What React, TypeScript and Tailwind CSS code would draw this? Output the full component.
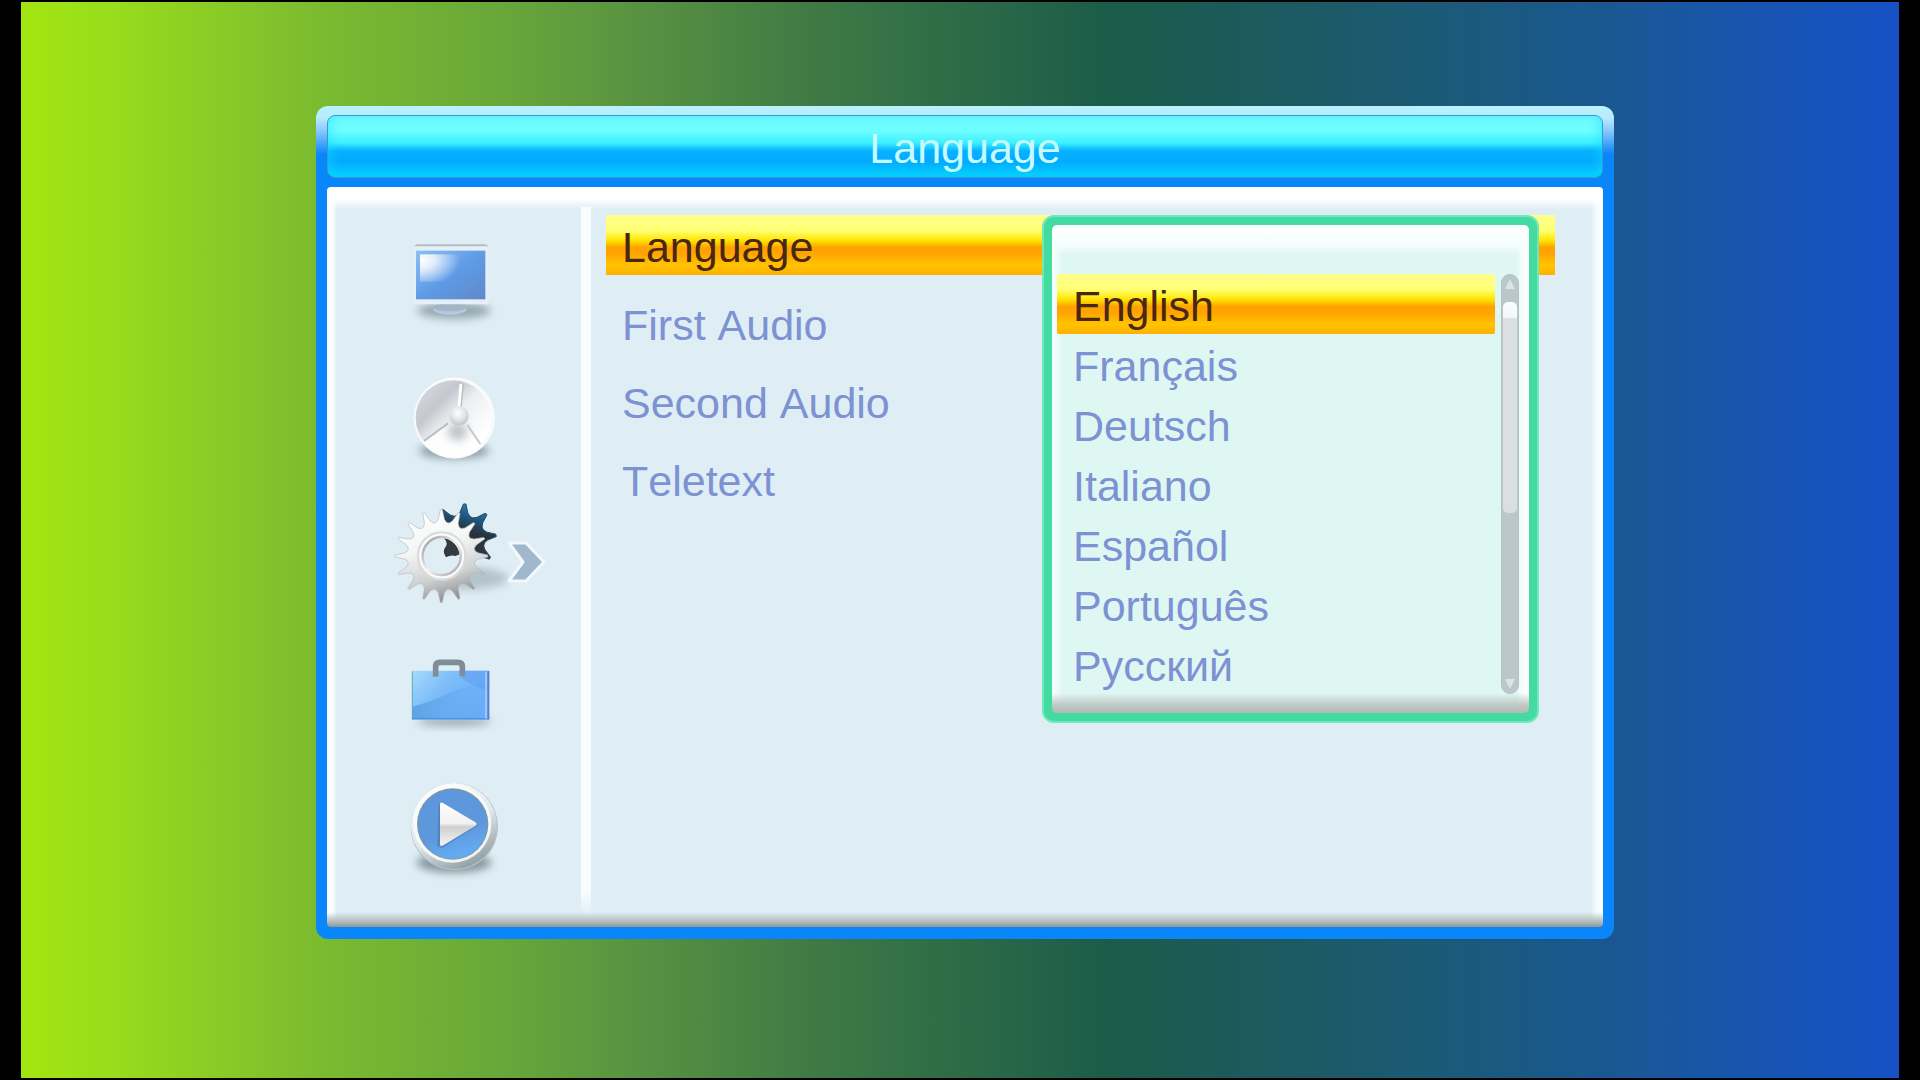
import { useState } from "react";
import type { ReactNode } from "react";
import clsx from "clsx";

const SECTIONS = ["Picture", "Channel Search", "System", "Tools", "Media"] as const;
type Section = (typeof SECTIONS)[number];

const MENU = ["Language", "First Audio", "Second Audio", "Teletext"];
const LANGUAGES = ["English", "Français", "Deutsch", "Italiano", "Español", "Português", "Русский"];

const HIGHLIGHT =
  "bg-[linear-gradient(to_bottom,#ffff8c_0%,#ffff74_26%,#ffe600_42%,#ffa200_54%,#ffa400_64%,#ffc400_84%,#ffb000_100%)] text-[#4a2614]";

// Spiky gear outline: one narrow tip per tooth, straight valleys between them.
function gearPoints(cx: number, cy: number, teeth: number, tip: number, root: number, start: number) {
  const step = 360 / teeth;
  const points: string[] = [];
  const at = (angle: number, r: number) => {
    const rad = (angle * Math.PI) / 180;
    points.push(`${(cx + r * Math.cos(rad)).toFixed(1)},${(cy + r * Math.sin(rad)).toFixed(1)}`);
  };
  for (let i = 0; i < teeth; i++) {
    const a = start + i * step;
    at(a - step * 0.4, root);
    at(a - step * 0.22, root + 8);
    at(a - step * 0.05, tip - 1);
    at(a + step * 0.05, tip);
    at(a + step * 0.22, root + 8);
    at(a + step * 0.4, root);
  }
  return points.join(" ");
}

function IconFrame({ top, children }: { top: number; children: ReactNode }) {
  return (
    <svg viewBox={`0 ${-top} 540 411`} className="h-[137px] w-[180px]" aria-hidden>
      {children}
    </svg>
  );
}

function MonitorIcon() {
  return (
    <IconFrame top={21}>
      <defs>
        <linearGradient id="screen" x1="0" y1="0" x2="1" y2="1">
          <stop offset="0" stopColor="#8cc0f4" />
          <stop offset="0.5" stopColor="#5f9be6" />
          <stop offset="1" stopColor="#6089c8" />
        </linearGradient>
        <radialGradient id="glare" cx="0" cy="0.2" r="1">
          <stop offset="0" stopColor="#fff" />
          <stop offset="0.35" stopColor="#fff" stopOpacity="0.8" />
          <stop offset="1" stopColor="#fff" stopOpacity="0" />
        </radialGradient>
        <filter id="soft" x="-30%" y="-60%" width="160%" height="220%">
          <feGaussianBlur stdDeviation="13" />
        </filter>
      </defs>
      <ellipse cx="222" cy="272" rx="110" ry="24" fill="#75868f" opacity="0.7" filter="url(#soft)" />
      <ellipse cx="210" cy="268" rx="50" ry="16" fill="#b4cbe2" />
      <ellipse cx="210" cy="262" rx="50" ry="12" fill="#a3b6c8" />
      <path d="M102 82 q2 -9 12 -9 h200 q9 0 11 9 z" fill="#b3bfc4" />
      <rect x="100" y="79" width="226" height="174" rx="5" fill="#e6eff8" />
      <rect x="108" y="92" width="208" height="146" fill="url(#screen)" />
      <rect x="120" y="103" width="120" height="82" fill="url(#glare)" />
    </IconFrame>
  );
}

function DishIcon() {
  return (
    <IconFrame top={30}>
      <defs>
        <linearGradient id="dish" x1="0.1" y1="0.1" x2="0.8" y2="0.8">
          <stop offset="0" stopColor="#d5d9de" />
          <stop offset="0.3" stopColor="#c4c8cf" />
          <stop offset="0.55" stopColor="#eceef1" />
          <stop offset="1" stopColor="#fff" />
        </linearGradient>
        <radialGradient id="knob" cx="0.45" cy="0.35" r="0.6">
          <stop offset="0" stopColor="#fff" />
          <stop offset="0.6" stopColor="#e3e4e7" />
          <stop offset="1" stopColor="#c6c8cc" />
        </radialGradient>
      </defs>
      <ellipse cx="222" cy="272" rx="105" ry="24" fill="#7a8b94" opacity="0.85" filter="url(#soft)" />
      <circle cx="223" cy="174" r="122" fill="#f8fafb" />
      <circle cx="220" cy="174" r="113" fill="url(#dish)" />
      <path d="M205 190 L128 245 Q168 290 225 292 Q275 290 303 252 L262 195 Z" fill="#fff" opacity="0.8" />
      <ellipse cx="233" cy="214" rx="30" ry="28" fill="#a9adb2" opacity="0.7" filter="url(#soft)" />
      <path d="M243 72 L237 145" stroke="#fff" strokeWidth="9" />
      <path d="M250 72 L243 142" stroke="#b9bdc2" strokeWidth="4" />
      <path d="M204 190 L132 243" stroke="#b9bdc2" strokeWidth="6" />
      <path d="M262 195 L301 252" stroke="#c4c7cb" strokeWidth="6" />
      <circle cx="237" cy="168" r="29" fill="url(#knob)" />
    </IconFrame>
  );
}

function GearIcon() {
  return (
    <IconFrame top={9}>
      <defs>
        <linearGradient id="steel" x1="0.3" y1="0" x2="0.6" y2="1">
          <stop offset="0" stopColor="#fff" />
          <stop offset="0.4" stopColor="#f4f5f5" />
          <stop offset="0.72" stopColor="#cfd0d1" />
          <stop offset="1" stopColor="#85888a" />
        </linearGradient>
        <linearGradient id="ring" x1="0" y1="0" x2="1" y2="1">
          <stop offset="0" stopColor="#8f9294" />
          <stop offset="0.5" stopColor="#f2f2f2" />
          <stop offset="1" stopColor="#9da0a2" />
        </linearGradient>
        <linearGradient id="dark" x1="0.7" y1="0" x2="0.4" y2="1">
          <stop offset="0" stopColor="#2c7fbd" />
          <stop offset="0.22" stopColor="#1d5680" />
          <stop offset="0.4" stopColor="#27323a" />
          <stop offset="1" stopColor="#3c4145" />
        </linearGradient>
        <clipPath id="hole">
          <circle cx="185" cy="198" r="54" />
        </clipPath>
      </defs>
      <ellipse cx="255" cy="265" rx="130" ry="34" fill="#8a99a1" opacity="0.5" filter="url(#soft)" />
      <polygon
        points={gearPoints(245, 145, 9, 104, 70, -85)}
        fill="url(#dark)"
        stroke="#2a4a60"
        strokeWidth="3"
        strokeLinejoin="round"
      />
      <polygon
        points={gearPoints(184, 198, 16, 140, 102, -90)}
        fill="url(#steel)"
        stroke="#b3b8bb"
        strokeWidth="2"
        strokeLinejoin="round"
      />
      <circle cx="185" cy="198" r="54" fill="#dfeef5" />
      <g clipPath="url(#hole)">
        <path d="M186 138 Q208 158 196 172 Q186 184 198 202 Q212 194 226 198 L246 190 V138 Z" fill="#363a3f" />
      </g>
      <circle cx="185" cy="198" r="71" fill="none" stroke="#d9dbdc" strokeWidth="7" />
      <circle cx="185" cy="198" r="64" fill="none" stroke="#fafafa" strokeWidth="7" />
      <circle cx="185" cy="198" r="57" fill="none" stroke="url(#ring)" strokeWidth="7" />
    </IconFrame>
  );
}

function BriefcaseIcon() {
  return (
    <IconFrame top={48}>
      <defs>
        <linearGradient id="case" x1="0" y1="0" x2="1" y2="0.6">
          <stop offset="0" stopColor="#a6dcfb" />
          <stop offset="0.45" stopColor="#7cbcf8" />
          <stop offset="1" stopColor="#6badf8" />
        </linearGradient>
        <linearGradient id="wave" x1="0" y1="0" x2="1" y2="0">
          <stop offset="0" stopColor="#4f98dc" stopOpacity="0.7" />
          <stop offset="1" stopColor="#66adf8" stopOpacity="0.2" />
        </linearGradient>
      </defs>
      <ellipse cx="222" cy="244" rx="112" ry="14" fill="#7c8f99" opacity="0.7" filter="url(#soft)" />
      <rect x="96" y="92" width="232" height="147" rx="3" fill="url(#case)" />
      <path d="M97 200 Q160 184 205 160 T328 128 V236 H97 Z" fill="url(#wave)" />
      <path d="M240 92 H328 V150 Q290 146 240 112 Z" fill="#5b9cf2" opacity="0.5" />
      <path d="M97 94 V238" stroke="#5aa9c4" strokeWidth="3" />
      <path d="M96 236 H328" stroke="#4a94dc" strokeWidth="4" />
      <path d="M318 95 V236" stroke="#b9d3fb" strokeWidth="4" />
      <path d="M325 93 V238" stroke="#5a7fd0" strokeWidth="5" />
      <path d="M167 110 V80 Q167 67 180 67 H234 Q247 67 247 80 V108" fill="none" stroke="#808d98" strokeWidth="17" />
    </IconFrame>
  );
}

function PlayIcon() {
  return (
    <IconFrame top={27}>
      <defs>
        <linearGradient id="rim" x1="0.2" y1="0" x2="0.7" y2="1">
          <stop offset="0" stopColor="#fff" />
          <stop offset="0.55" stopColor="#dfe8ea" />
          <stop offset="1" stopColor="#8c9a9f" />
        </linearGradient>
        <linearGradient id="disc" x1="0" y1="0" x2="0.3" y2="1">
          <stop offset="0" stopColor="#5c97dc" />
          <stop offset="0.7" stopColor="#5e98dc" />
          <stop offset="1" stopColor="#63aaf0" />
        </linearGradient>
        <linearGradient id="arrow" x1="0" y1="0" x2="0" y2="1">
          <stop offset="0" stopColor="#fff" />
          <stop offset="0.48" stopColor="#f1f1f1" />
          <stop offset="0.56" stopColor="#cfcfd0" />
          <stop offset="1" stopColor="#f6f6f6" />
        </linearGradient>
      </defs>
      <ellipse cx="222" cy="278" rx="112" ry="30" fill="#6c7e86" opacity="0.8" filter="url(#soft)" />
      <circle cx="223" cy="170" r="131" fill="#b3bfc3" />
      <circle cx="222" cy="168" r="129" fill="url(#rim)" />
      <circle cx="217" cy="161" r="117" fill="#f8fbfc" opacity="0.9" />
      <circle cx="218" cy="162" r="107" fill="#80949f" />
      <circle cx="218" cy="163" r="104" fill="url(#disc)" />
      <path d="M176 102 L172 228 L186 234 L294 166 Z" fill="#3f6ca8" opacity="0.5" />
      <path d="M180 104 Q180 94 190 100 L286 157 Q294 163 286 168 L190 226 Q180 232 180 222 Z" fill="url(#arrow)" />
    </IconFrame>
  );
}

const ICONS: Record<Section, () => ReactNode> = {
  Picture: MonitorIcon,
  "Channel Search": DishIcon,
  System: GearIcon,
  Tools: BriefcaseIcon,
  Media: PlayIcon,
};

function Sidebar({ active, onSelect }: { active: Section; onSelect: (section: Section) => void }) {
  return (
    <nav className="w-[254px] shrink-0 pt-[26px] pb-[29px]" aria-label="Sections">
      {SECTIONS.map((section) => {
        const Icon = ICONS[section];
        return (
          <button
            key={section}
            type="button"
            aria-label={section}
            aria-current={section === active}
            className="relative block h-[137px] w-full pl-[53px]"
            onClick={() => onSelect(section)}
          >
            <Icon />
            {section === active && (
              <svg viewBox="0 0 40 48" className="absolute top-[51px] right-[35px] h-12 w-10" aria-hidden>
                <path
                  d="M3 5 H20 L38 24 L20 43 H3 L17 24 Z"
                  fill="#9fb8cb"
                  stroke="#f2f8fb"
                  strokeWidth="3"
                  strokeLinejoin="round"
                />
              </svg>
            )}
          </button>
        );
      })}
    </nav>
  );
}

function LanguagePopup({ value, onChange }: { value: string; onChange: (language: string) => void }) {
  return (
    <div className="absolute top-0 right-4 z-10 w-[497px] rounded-[12px] border-2 border-[#6fe8bb] bg-[#43dba2] p-2">
      <div className="flex rounded-[5px] bg-[linear-gradient(to_top,#b2b9b6_0,#bfc9c5_8px,transparent_20px),linear-gradient(to_bottom,#ffffff_0,#f4fefd_20px,transparent_30px),linear-gradient(to_left,#ffffff_0,#f4fdfb_8px,transparent_12px),linear-gradient(to_right,#f8fefd_0,#e8faf6_8px,transparent_10px)] bg-[#dff7f3] pt-[49px] pr-[10px] pb-[19px] pl-[5px]">
        <div role="listbox" aria-label="Language" className="min-w-0 flex-1">
          {LANGUAGES.map((language) => (
            <button
              key={language}
              type="button"
              role="option"
              aria-selected={language === value}
              className={clsx(
                "block h-[60px] w-full rounded-[2px] px-4 pt-1 text-left",
                language === value && HIGHLIGHT,
              )}
              onClick={() => onChange(language)}
            >
              {language}
            </button>
          ))}
        </div>
        <div className="ml-[6px] flex w-[18px] flex-col items-center rounded-full border border-[#b4c2c4] bg-[#bac8ca] pb-1">
          <svg viewBox="0 0 10 10" className="mt-1 h-[10px] w-[10px]" aria-hidden>
            <path d="M5 0 L10 10 H0 Z" fill="#dde3e4" />
          </svg>
          <div className="mt-[13px] h-[211px] w-[14px] rounded-[5px] bg-[linear-gradient(to_bottom,#fbfdfe_0,#f4f8fa_15px,#dcdfe0_17px)]" />
          <svg viewBox="0 0 10 10" className="mt-auto h-[10px] w-[10px]" aria-hidden>
            <path d="M0 0 H10 L5 10 Z" fill="#dde3e4" />
          </svg>
        </div>
      </div>
    </div>
  );
}

export default function App() {
  const [section, setSection] = useState<Section>("System");
  const [item, setItem] = useState("Language");
  const [language, setLanguage] = useState("English");

  return (
    <main className="min-h-screen border-x-[21px] border-y-2 border-black bg-[linear-gradient(to_right,#a2e610_0%,#98dc1c_5%,#7dbd2e_15%,#68a63a_26%,#558f42_34%,#3d7845_43%,#1b5c49_58%,#1c5a5e_66%,#1b5a78_76%,#1a5793_85%,#1855b0_92%,#1652c6_100%)] pt-[104px] pr-[285px] pb-[139px] pl-[295px] font-['Liberation_Sans',Arial,sans-serif] text-[43px] leading-[56px] text-[#7d92d2] [font-kerning:none]">
      <section className="rounded-[12px] bg-[linear-gradient(to_bottom,#b8f2ff_0,#b9eafc_12px,#86c4fb_26px,#0a86fb_48px)] px-[11px] pt-[9px] pb-3">
        <h1 className="h-[63px] rounded-[8px] border border-[#2f9fd0] bg-[linear-gradient(to_bottom,#84ffff_0%,#6cfeff_25%,#3cf0ff_44%,#07b2ff_57%,#04aaff_74%,#00c6ff_94%)] pt-1 text-center text-[#c4fbff] shadow-[inset_0_0_14px_#14dcffaa]">
          Language
        </h1>

        <div className="mt-[9px] flex rounded-[4px] bg-[linear-gradient(to_top,#8f9796_0,#b6bfbf_6px,transparent_15px),linear-gradient(to_bottom,#ffffff_0,#ffffff_12px,transparent_22px),linear-gradient(to_right,#ffffff_0,#f6fbfd_6px,transparent_10px),linear-gradient(to_left,#ffffff_0,#f4fafc_7px,transparent_12px)] bg-[#dfeef5]">
          <Sidebar active={section} onSelect={setSection} />
          <div className="mt-5 mb-3 w-[10px] shrink-0 bg-[linear-gradient(to_top,transparent_0,#f8fcfd_24px,#f8fcfd_100%)]" />

          <div className="relative min-w-0 flex-1 pt-7 pr-12 pl-[15px]">
            <ul className="relative flex flex-col gap-[18px]">
              {MENU.map((label) => (
                <li key={label}>
                  <button
                    type="button"
                    className={clsx("block h-[60px] w-full px-4 pt-1 text-left", label === item && HIGHLIGHT)}
                    onClick={() => setItem(label)}
                  >
                    {label}
                  </button>
                </li>
              ))}
              {item === "Language" && (
                <li>
                  <LanguagePopup value={language} onChange={setLanguage} />
                </li>
              )}
            </ul>
          </div>
        </div>
      </section>
    </main>
  );
}
